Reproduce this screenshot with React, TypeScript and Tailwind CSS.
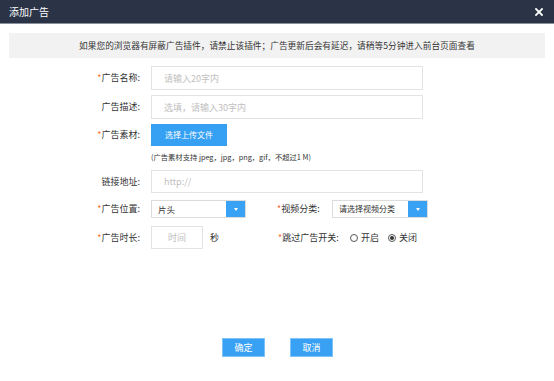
import React from 'react';

const font = { fontFamily: '"Noto Sans CJK SC", "Noto Sans", sans-serif' };

const Req = () => <span className="text-[#ff6a2b]">*</span>;

const Label: React.FC<{ text: string; required?: boolean }> = ({ text, required }) => (
  <div className="w-[141px] shrink-0 pr-[1px] text-right text-[9px] text-[#333]">
    {required && <Req />}
    {text}:
  </div>
);

const Arrow = () => (
  <div className="flex h-full w-[19px] items-center justify-center bg-[#3aa2f4]">
    <div className="h-0 w-0 border-x-[2.5px] border-t-[3px] border-x-transparent border-t-white" />
  </div>
);

const Radio: React.FC<{ checked?: boolean; label: string }> = ({ checked, label }) => (
  <div className="flex items-center">
    <div className="flex h-[8px] w-[8px] items-center justify-center rounded-full border border-[#555] bg-white">
      {checked && <div className="h-[4px] w-[4px] rounded-full bg-[#333]" />}
    </div>
    <span className="ml-[3px] text-[9px] text-[#333]">{label}</span>
  </div>
);

export default function App() {
  return (
    <div className="relative h-[381px] w-[554px] overflow-hidden bg-white" style={font}>
      {/* header */}
      <div className="flex h-[24px] items-center justify-between border-b border-[#8a919c] bg-[#2a3446] pl-[9px] pr-[11px]">
        <span className="text-[10px] text-white">添加广告</span>
        <svg width="8" height="8" viewBox="0 0 8 8">
          <path d="M1 1 L7 7 M7 1 L1 7" stroke="#fff" strokeWidth="1.8" strokeLinecap="square" />
        </svg>
      </div>

      {/* notice */}
      <div className="mx-[9px] mt-[9px] flex h-[25px] items-center justify-center bg-[#f2f2f2] text-[8.7px] text-[#333]">
        如果您的浏览器有屏蔽广告插件，请禁止该插件；广告更新后会有延迟，请稍等5分钟进入前台页面查看
      </div>

      <div className="flex flex-col">
        {/* name */}
        <div className="mt-[8px] flex items-center">
          <Label text="广告名称" required />
          <input
            className="ml-[10px] h-[24px] w-[272px] border border-[#e3e3e3] px-[12px] text-[9px] outline-none placeholder:text-[#c0c0c0]"
            placeholder="请输入20字内"
          />
        </div>

        {/* desc */}
        <div className="mt-[5px] flex items-center">
          <Label text="广告描述" />
          <input
            className="ml-[10px] h-[24px] w-[272px] border border-[#e3e3e3] px-[12px] text-[9px] outline-none placeholder:text-[#c0c0c0]"
            placeholder="选填，请输入30字内"
          />
        </div>

        {/* material */}
        <div className="mt-[5px] flex items-center">
          <Label text="广告素材" required />
          <button className="ml-[10px] h-[22px] w-[76px] bg-[#36a0f3] text-[8px] text-white">选择上传文件</button>
        </div>
        <div className="mt-[5px] flex h-[12px] items-center pl-[151px] text-[7.3px] text-[#333]">
          (广告素材支持 jpeg，jpg，png，gif，不超过1 M)
        </div>

        {/* link */}
        <div className="mt-[7px] flex items-center">
          <Label text="链接地址" />
          <input
            className="ml-[10px] h-[23px] w-[272px] border border-[#e3e3e3] px-[12px] text-[9px] outline-none placeholder:text-[#c0c0c0]"
            placeholder="http://"
          />
        </div>

        {/* position / category */}
        <div className="mt-[7px] flex items-center">
          <Label text="广告位置" required />
          <div className="ml-[10px] flex h-[18px] w-[95px] border border-[#dcdcdc]">
            <div className="flex flex-1 items-center pl-[6px] text-[8.5px] text-[#333]">片头</div>
            <Arrow />
          </div>
          <div className="ml-[31px] w-[55px] text-[9px] text-[#333]">
            <Req />视频分类:
          </div>
          <div className="flex h-[18px] w-[96px] border border-[#dcdcdc]">
            <div className="flex flex-1 items-center pl-[6px] text-[8px] text-[#333]">请选择视频分类</div>
            <Arrow />
          </div>
        </div>

        {/* duration / skip */}
        <div className="mt-[8px] flex items-center">
          <Label text="广告时长" required />
          <input
            className="ml-[10px] h-[23px] w-[52px] border border-[#e3e3e3] text-center text-[9px] outline-none placeholder:text-[#c0c0c0]"
            placeholder="时间"
          />
          <span className="ml-[7px] text-[9px] text-[#333]">秒</span>
          <div className="ml-[59px] w-[72px] text-[9px] text-[#333]">
            <Req />跳过广告开关:
          </div>
          <Radio label="开启" />
          <div className="ml-[9px]">
            <Radio checked label="关闭" />
          </div>
        </div>
      </div>

      {/* footer buttons */}
      <div className="mt-[89px] flex pl-[222px]">
        <button className="h-[19px] w-[43px] border border-[#7ec3f7] bg-[#38a1f3] text-[9px] text-white">确定</button>
        <button className="ml-[25px] h-[19px] w-[43px] border border-[#7ec3f7] bg-[#38a1f3] text-[9px] text-white">取消</button>
      </div>
    </div>
  );
}
